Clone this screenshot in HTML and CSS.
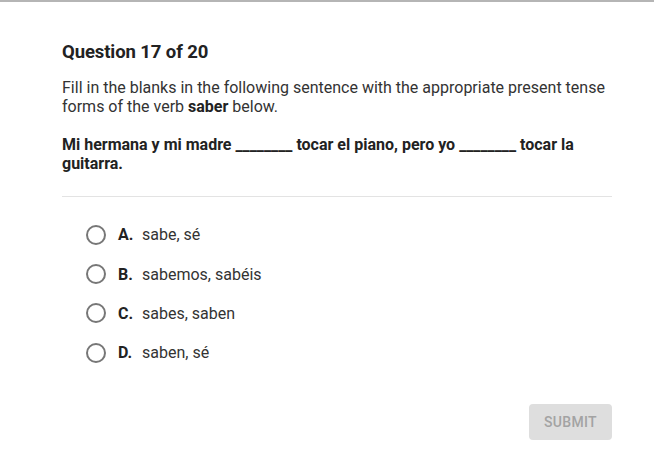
FILE: index.html
```html
<!DOCTYPE html>
<html>
<head>
<meta charset="utf-8">
<link rel="stylesheet" href="styles.css">
</head>
<body>
<div class="topbar"></div>
<main class="quiz">
  <h1 class="title">Question 17 of 20</h1>
  <p class="prompt">Fill in the blanks in the following sentence with the appropriate present tense forms of the verb <b>saber</b> below.</p>
  <p class="sentence">Mi hermana y mi madre ________ tocar el piano, pero yo ________ tocar la guitarra.</p>
  <hr class="divider">
  <ul class="options">
    <li class="option"><span class="radio"></span><span class="letter">A.</span><span class="text">sabe, sé</span></li>
    <li class="option"><span class="radio"></span><span class="letter">B.</span><span class="text">sabemos, sabéis</span></li>
    <li class="option"><span class="radio"></span><span class="letter">C.</span><span class="text">sabes, saben</span></li>
    <li class="option"><span class="radio"></span><span class="letter">D.</span><span class="text">saben, sé</span></li>
  </ul>
  <div class="actions"><button class="submit">SUBMIT</button></div>
</main>
</body>
</html>
```
FILE: styles.css
```css
html, body { margin: 0; padding: 0; background: #fff; }
body { font-family: Roboto, "Noto Sans", sans-serif; color: #333; }
.topbar { height: 2px; background: #b5b5b5; }
.quiz { width: 550px; margin-left: 62px; padding-top: 39px; }
.title { margin: 0; font-size: 18.5px; font-weight: 700; color: #222; line-height: 22px; letter-spacing: -0.1px; }
.prompt { margin: 15px 0 0; font-size: 16px; line-height: 19px; color: #333; }
.prompt b { color: #222; }
.sentence { margin: 19px 0 0; font-size: 16px; line-height: 19px; font-weight: 700; color: #222; }
.divider { margin: 23px 0 0; border: 0; border-top: 1px solid #e3e3e3; height: 0; }
.options { list-style: none; margin: 18px 0 0; padding: 0 0 0 24px; }
.option { display: flex; align-items: center; height: 39.4px; font-size: 16px; }
.radio { width: 16px; height: 16px; border: 2px solid #777; border-radius: 50%; box-sizing: content-box; flex: none; }
.letter { font-weight: 700; color: #222; margin-left: 12px; width: 24px; }
.text { color: #333; }
.actions { display: flex; justify-content: flex-end; margin-top: 31px; }
.submit { width: 83px; height: 36px; border: 0; border-radius: 4px; background: #dedede; color: #a3a3a3; font-family: Roboto, sans-serif; font-size: 14px; font-weight: 500; letter-spacing: 0.3px; }
```
